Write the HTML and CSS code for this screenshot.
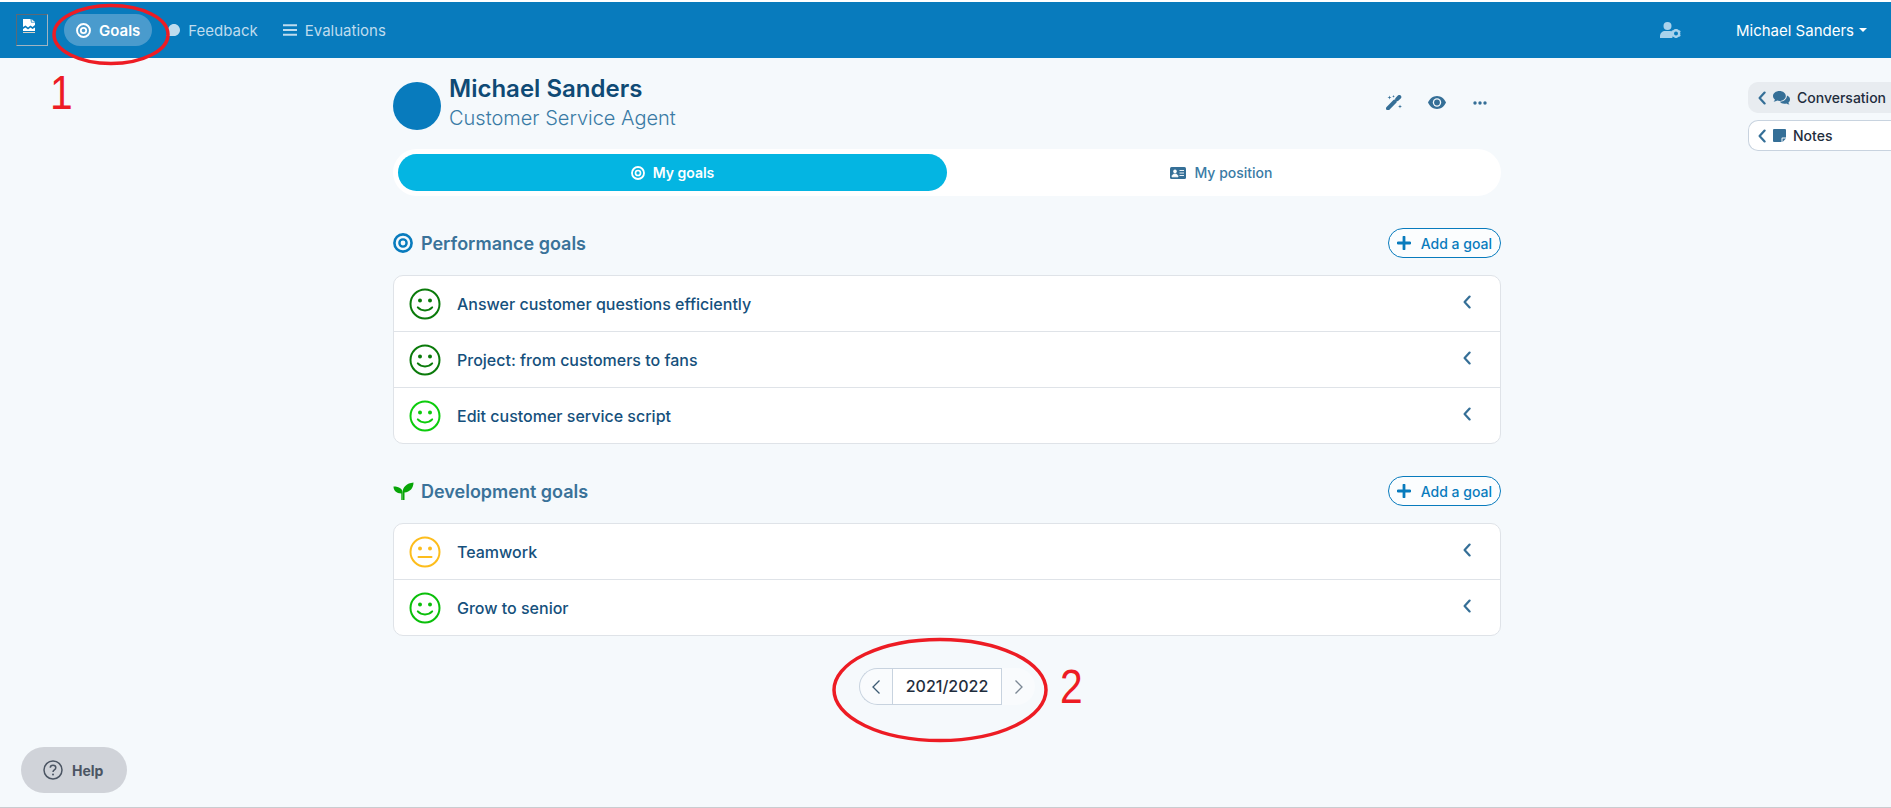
FILE: index.html
```html
<!DOCTYPE html>
<html lang="en">
<head>
    <meta charset="UTF-8">
    <title>Goals</title>
    <link rel="stylesheet" href="styles.css">
</head>
<body>
<svg width="0" height="0" class="defs">
    <symbol id="target" viewBox="0 0 20 20">
        <circle cx="10" cy="10" r="8.600" fill="none" stroke="currentColor" stroke-width="2.600"/>
        <circle cx="10" cy="10" r="3.600" fill="none" stroke="currentColor" stroke-width="2.400"/>
    </symbol>
    <symbol id="chev" viewBox="0 0 8 14">
        <path d="M6.600 1.600 1.600 7l5 5.400" fill="none" stroke="currentColor" stroke-width="2.200" stroke-linecap="round" stroke-linejoin="round"/>
    </symbol>
    <symbol id="plus" viewBox="0 0 14 14">
        <path d="M7 1v12M1 7h12" fill="none" stroke="currentColor" stroke-width="2.800" stroke-linecap="round"/>
    </symbol>
    <symbol id="happy" viewBox="0 0 32 32">
        <circle cx="16" cy="16" r="14.500" fill="none" stroke="currentColor" stroke-width="2"/>
        <circle cx="11" cy="12.600" r="2" fill="currentColor"/>
        <circle cx="21" cy="12.600" r="2" fill="currentColor"/>
        <path d="M8.800 19.400c3.600 4 10.800 4 14.400 0" fill="none" stroke="currentColor" stroke-width="2" stroke-linecap="round"/>
    </symbol>
    <symbol id="neutral" viewBox="0 0 32 32">
        <circle cx="16" cy="16" r="14.500" fill="none" stroke="currentColor" stroke-width="2"/>
        <circle cx="11" cy="12.600" r="2" fill="currentColor"/>
        <circle cx="21" cy="12.600" r="2" fill="currentColor"/>
        <path d="M9.500 21h13" fill="none" stroke="currentColor" stroke-width="2" stroke-linecap="round"/>
    </symbol>
</svg>

<header class="topbar">
    <div class="logo">
        <svg class="logo-img" viewBox="0 0 12 14">
            <path d="M0 0h7.500L8 3.500h4V6L9.500 8 7.500 6.500 5 8.500 2.500 6.500 0 8z" fill="#fff"/>
            <path d="M8.500 0 12 3H8.500z" fill="#dfe9f0"/>
            <path d="M0 10 2.500 8.500l2.500 2 2.500-2 2 1.500L12 8.500V12H0z" fill="#fff"/>
            <path d="M0 13h12v1H0z" fill="#dcd3c4"/>
        </svg>
    </div>
    <nav class="nav">
        <a class="nav-item active"><svg class="ic-15"><use href="#target"/></svg>Goals</a>
        <a class="nav-item">
            <svg class="ic-feedback" viewBox="0 0 14 12"><path d="M8 0c3.300 0 6 2.700 6 6s-2.700 6-6 6H0c1.200-.8 2-1.800 2-3V6c0-3.300 2.700-6 6-6z" fill="#bfdcee"/></svg>Feedback
        </a>
        <a class="nav-item">
            <svg class="ic-bars" viewBox="0 0 14 12"><path d="M0 1.200h14M0 6h14M0 10.800h14" stroke="#bfdcee" stroke-width="2"/></svg>Evaluations
        </a>
    </nav>
    <div class="top-right">
        <svg class="ic-usergear" viewBox="0 0 21 16">
            <circle cx="7.500" cy="4" r="4" fill="#a9d2ec"/>
            <path d="M0 16v-2c0-3 2.500-5 5-5h5c1 0 1.700.2 2.400.6V16z" fill="#a9d2ec"/>
            <circle cx="16" cy="11.500" r="3.200" fill="none" stroke="#a9d2ec" stroke-width="2.400"/>
            <path d="M16 7v1.500M16 14.500V16M11.700 9l1.300.8M19 13.200l1.300.8M11.700 14l1.300-.8M19 9.800l1.300-.8" stroke="#a9d2ec" stroke-width="1.600"/>
        </svg>
        <a class="user-menu">Michael Sanders<span class="caret"></span></a>
    </div>
</header>

<div class="page">
    <main class="content">
        <section class="profile">
            <div class="avatar"></div>
            <div class="who">
                <h1>Michael Sanders</h1>
                <p>Customer Service Agent</p>
            </div>
            <div class="tools">
                <svg class="tool-wand" viewBox="0 0 17 15">
                    <path d="M2 13.300 8.600 6.700M11.200 4.100 13.300 2" fill="none" stroke="#356f97" stroke-width="4" stroke-linecap="round"/>
                    <path d="M3.500.5l.5 1.500 1.500.5-1.500.5-.5 1.500L3 3l-1.500-.5L3 2zM7.500 0l.4 1 1 .4-1 .4-.4 1-.4-1-1-.4 1-.4zM14 9.500l.5 1.500 1.500.5-1.500.5-.5 1.500-.5-1.500-1.500-.5 1.500-.5z" fill="#356f97"/>
                </svg>
                <svg class="tool-eye" viewBox="0 0 18 13">
                    <path d="M9 0c4 0 7.400 2.800 9 6.500C16.400 10.200 13 13 9 13s-7.400-2.800-9-6.500C1.600 2.800 5 0 9 0z" fill="#356f97"/>
                    <circle cx="9" cy="6.500" r="4.200" fill="#f5f9fc"/>
                    <circle cx="9" cy="6.500" r="2.900" fill="#356f97"/>
                </svg>
                <svg class="tool-dots" viewBox="0 0 14 4">
                    <circle cx="2" cy="2" r="1.700" fill="#356f97"/>
                    <circle cx="7" cy="2" r="1.700" fill="#356f97"/>
                    <circle cx="12" cy="2" r="1.700" fill="#356f97"/>
                </svg>
            </div>
        </section>

        <div class="tabs">
            <a class="tab on"><svg class="ic-14"><use href="#target"/></svg>My goals</a>
            <a class="tab">
                <svg class="ic-card" viewBox="0 0 16 12">
                    <rect width="16" height="12" rx="1.500" fill="#356f97"/>
                    <circle cx="5" cy="4.400" r="1.800" fill="#fff"/>
                    <path d="M2 9.800c0-1.800 1.300-2.800 3-2.800s3 1 3 2.800zM9.500 3.500h4.500M9.500 6h4.500M9.500 8.500h4.500" fill="#fff" stroke="#fff" stroke-width=".9"/>
                </svg>My position
            </a>
        </div>

        <section class="goals">
            <div class="goals-head">
                <h2><svg class="ic-20 blue"><use href="#target"/></svg>Performance goals</h2>
                <a class="add-btn"><svg class="ic-plus"><use href="#plus"/></svg>Add a goal</a>
            </div>
            <ul class="goal-list">
                <li><svg class="smile dark"><use href="#happy"/></svg><span>Answer customer questions efficiently</span><svg class="row-chev"><use href="#chev"/></svg></li>
                <li><svg class="smile dark"><use href="#happy"/></svg><span>Project: from customers to fans</span><svg class="row-chev"><use href="#chev"/></svg></li>
                <li><svg class="smile green"><use href="#happy"/></svg><span>Edit customer service script</span><svg class="row-chev"><use href="#chev"/></svg></li>
            </ul>
        </section>

        <section class="goals">
            <div class="goals-head">
                <h2>
                    <svg class="ic-seed" viewBox="0 0 20 18">
                        <path d="M9 18V10.500C9 7 6 4.500 0 4.500c0 4 3 7 7.800 7v6.500z" fill="#07a507"/>
                        <path d="M9 18v-8C9.500 5 13 1.200 20 .5c0 5.500-3.500 9.500-9 10V18z" fill="#07a507"/>
                    </svg>Development goals
                </h2>
                <a class="add-btn"><svg class="ic-plus"><use href="#plus"/></svg>Add a goal</a>
            </div>
            <ul class="goal-list">
                <li><svg class="smile amber"><use href="#neutral"/></svg><span>Teamwork</span><svg class="row-chev"><use href="#chev"/></svg></li>
                <li><svg class="smile green2"><use href="#happy"/></svg><span>Grow to senior</span><svg class="row-chev"><use href="#chev"/></svg></li>
            </ul>
        </section>

        <div class="pager">
            <a class="pager-prev"><svg viewBox="0 0 10 16"><path d="M8.500 1.500 2 8l6.500 6.500" fill="none" stroke="#3d5a73" stroke-width="1.300"/></svg></a>
            <span class="pager-year">2021/2022</span>
            <a class="pager-next"><svg viewBox="0 0 10 16"><path d="M1.500 1.500 8 8l-6.500 6.500" fill="none" stroke="#7b8794" stroke-width="1.300"/></svg></a>
        </div>
    </main>

    <aside class="side">
        <a class="side-tab grey">
            <svg class="side-chev"><use href="#chev"/></svg>
            <svg class="ic-comments" viewBox="0 0 17 14">
                <path d="M6.500 0C10 0 12.800 2.200 12.800 5S10 10 6.500 10c-.9 0-1.700-.1-2.400-.4C3.200 10.300 2 10.800.6 10.800c.6-.6 1.100-1.400 1.300-2.300C.7 7.600 0 6.400 0 5 0 2.200 2.900 0 6.500 0z" fill="#356f97"/>
                <path d="M14 4.600c1.800.7 3 2.100 3 3.800 0 1.200-.6 2.300-1.600 3.100.1.800.6 1.600 1.100 2.100-1.200 0-2.300-.4-3.100-1.100-.6.200-1.300.3-2 .3-2 0-3.700-.8-4.600-2 3.800-.1 7.200-2.500 7.200-6.200z" fill="#356f97"/>
            </svg>
            Conversation
        </a>
        <a class="side-tab">
            <svg class="side-chev"><use href="#chev"/></svg>
            <svg class="ic-note" viewBox="0 0 13 13">
                <path d="M1 0h11a1 1 0 0 1 1 1v7.500H9.500a1 1 0 0 0-1 1V13H1a1 1 0 0 1-1-1V1a1 1 0 0 1 1-1z" fill="#356f97"/>
                <path d="M9.500 13V9.500H13z" fill="#356f97"/>
            </svg>
            Notes
        </a>
    </aside>
</div>

<a class="help"><svg class="ic-help" viewBox="0 0 20 20"><circle cx="10" cy="10" r="9" fill="none" stroke="#4b5563" stroke-width="1.500"/><path d="M7.300 7.800C7.300 6.200 8.500 5.300 10 5.300s2.800 1 2.800 2.400c0 2.300-2.800 2.100-2.800 4.300" fill="none" stroke="#4b5563" stroke-width="1.500"/><circle cx="10" cy="14.500" r="1" fill="#4b5563"/></svg>Help</a>

<!-- red marks drawn on top of the screenshot -->
<svg class="marks" viewBox="0 0 1891 808">
    <ellipse cx="111" cy="34.500" rx="57" ry="29" fill="none" stroke="#ed1c24" stroke-width="3.500"/>
    <ellipse cx="940" cy="690" rx="106" ry="50.500" fill="none" stroke="#ed1c24" stroke-width="3.500"/>
</svg>
<span class="mark-num one">1</span>
<span class="mark-num two">2</span>
</body>
</html>
```

FILE: styles.css
```css
*{
    margin:0;
    padding:0;
    box-sizing:border-box;
}
html,body{
    height:100%;
}
body{
    position:relative;
    height:808px;
    overflow:hidden;
    padding-top:2px;
    font-family:Inter,"Noto Sans",sans-serif;
    font-size:15px;
    color:#15507c;
    background:#f5f9fc;
    border-bottom:1px solid #c9ccd0;
}
body:before{
    content:'';
    position:absolute;
    top:0;
    left:0;
    right:0;
    height:2px;
    background:#fff;
}
a{
    display:flex;
    align-items:center;
}
ul{
    list-style-type:none;
}
.defs{
    position:absolute;
}

/* top bar */
.topbar{
    display:flex;
    align-items:center;
    height:56px;
    padding:0 24px 0 16px;
    background:#087bbd;
}
.logo{
    display:flex;
    justify-content:center;
    width:32px;
    height:32px;
    padding-top:4px;
    padding-right:7px;
    border:1px solid #5a6a78;
    border-right-color:#9fb4c2;
    border-bottom-color:#9fb4c2;
}
.logo-img{
    width:12px;
    height:14px;
}
.nav{
    display:flex;
    align-items:center;
    margin-left:16px;
}
.nav-item{
    height:32px;
    margin-right:25px;
    gap:8px;
    color:#bfdcee;
}
.nav-item.active{
    margin-right:14px;
    padding:0 12px;
    gap:8px;
    font-weight:600;
    color:#fff;
    border-radius:16px;
    background:#4a9bcd;
}
.ic-15{
    width:15px;
    height:15px;
}
.ic-feedback{
    width:14px;
    height:12px;
}
.ic-bars{
    width:14px;
    height:12px;
}
.top-right{
    display:flex;
    align-items:center;
    margin-left:auto;
}
.ic-usergear{
    width:21px;
    height:16px;
}
.user-menu{
    margin-left:55px;
    color:#fff;
}
.caret{
    width:0;
    height:0;
    margin-left:5px;
    border:4.500px solid transparent;
    border-top-color:#fff;
    border-bottom-width:0;
}

/* page grid */
.page{
    display:grid;
    grid-template-columns:393px 1108px 1fr;
}
.content{
    grid-column:2;
}
.side{
    grid-column:3;
    justify-self:end;
    width:143px;
    padding-top:24px;
}

/* profile head */
.profile{
    display:flex;
    align-items:center;
    height:91px;
    padding-top:5px;
}
.avatar{
    width:48px;
    height:48px;
    margin-right:8px;
    border-radius:50%;
    background:#087bbd;
}
.who{
    margin-top:-7px;
}
.who h1{
    font-size:24px;
    font-weight:600;
    line-height:30px;
    color:#0f4a75;
}
.who p{
    margin-top:1px;
    font-size:20px;
    font-weight:300;
    line-height:26px;
    color:#3a7ba5;
}
.tools{
    display:flex;
    align-items:center;
    margin-left:auto;
    margin-right:14px;
    margin-top:-7px;
}
.tool-wand{
    width:17px;
    height:15px;
    margin-right:25px;
}
.tool-eye{
    width:18px;
    height:13px;
    margin-right:27px;
}
.tool-dots{
    width:14px;
    height:4px;
}

/* tabs */
.tabs{
    display:flex;
    height:47px;
    padding:5px;
    border-radius:24px;
    background:#fff;
}
.tab{
    flex:1;
    justify-content:center;
    gap:8px;
    height:37px;
    font-size:14px;
    font-weight:500;
    color:#3a7ba5;
    border-radius:19px;
}
.tab.on{
    font-weight:600;
    flex:0 0 549px;
    color:#fff;
    background:#04b5e2;
}
.ic-14{
    width:14px;
    height:14px;
}
.ic-card{
    width:16px;
    height:12px;
}

/* goal sections */
.goals{
    margin-top:32px;
}
.goals-head{
    display:flex;
    align-items:center;
    justify-content:space-between;
    height:30px;
    margin-bottom:17px;
}
.goals-head h2{
    display:flex;
    align-items:center;
    gap:8px;
    font-size:18px;
    font-weight:600;
    color:#3a7299;
}
.ic-20{
    width:20px;
    height:20px;
}
.ic-seed{
    width:21px;
    height:18px;
    margin-right:-1px;
}
.blue{
    color:#087bbd;
}
.add-btn{
    gap:10px;
    height:30px;
    padding:0 8px;
    font-size:14px;
    font-weight:500;
    color:#087bbd;
    border:1px solid #087bbd;
    border-radius:15px;
    background:#fbfdfe;
}
.ic-plus{
    width:14px;
    height:14px;
}
.goal-list{
    border:1px solid #dfe3e8;
    border-radius:10px;
    background:#fff;
}
.goal-list li{
    display:flex;
    align-items:center;
    height:55px;
    padding:0 29px 0 15px;
    font-size:16px;
    font-weight:500;
    color:#15507c;
}
.goal-list li + li{
    height:56px;
    border-top:1px solid #dfe3e8;
}
.smile{
    flex:none;
    width:32px;
    height:32px;
    margin-right:16px;
}
.dark{
    color:#0a7a0a;
}
.green{
    color:#0ccc0c;
}
.green2{
    color:#0abf0a;
}
.amber{
    color:#fdbd1c;
}
.row-chev{
    width:8px;
    height:14px;
    margin-left:auto;
    margin-bottom:4px;
    color:#356f97;
}

/* year switcher */
.pager{
    display:flex;
    justify-content:center;
    height:37px;
    margin-top:32px;
}
.pager a{
    justify-content:center;
    width:33px;
}
.pager svg{
    width:10px;
    height:16px;
}
.pager-prev{
    border:1px solid #c8d3df;
    border-right:0;
    border-radius:19px 0 0 19px;
    background:#f9fbfd;
}
.pager-next{
    border-radius:0 19px 19px 0;
    background:#f9fbfd;
}
.pager-year{
    width:110px;
    font-size:16px;
    font-weight:500;
    line-height:35px;
    text-align:center;
    color:#1f2d3d;
    border:1px solid #c8d3df;
    background:#fff;
}

/* right tabs */
.side-tab{
    height:31px;
    margin-bottom:7px;
    padding-left:9px;
    font-size:14px;
    font-weight:500;
    color:#1f2d3d;
    border:1px solid #c8d3df;
    border-right:0;
    border-radius:10px 0 0 10px;
    background:#fff;
}
.side-tab.grey{
    border-color:#e8ecf0;
    background:#e8ecf0;
}
.side-chev{
    width:8px;
    height:14px;
    margin-right:7px;
    color:#356f97;
}
.ic-comments{
    width:17px;
    height:14px;
    margin-right:7px;
}
.ic-note{
    width:13px;
    height:13px;
    margin-right:7px;
}

/* floating help */
.help{
    position:absolute;
    left:21px;
    top:747px;
    gap:9px;
    width:106px;
    height:46px;
    padding-left:22px;
    font-size:14px;
    font-weight:700;
    color:#4b5563;
    border-radius:23px;
    background:#d0d3d9;
}
.ic-help{
    width:20px;
    height:20px;
}

/* annotations */
.marks{
    position:absolute;
    top:0;
    left:0;
    width:1891px;
    height:808px;
    pointer-events:none;
}
.mark-num{
    position:absolute;
    font-family:"Liberation Sans",sans-serif;
    font-size:48px;
    line-height:48px;
    color:#ed1c24;
    transform:scaleX(.85);
    transform-origin:left top;
}
.mark-num.one{
    left:50px;
    top:69px;
}
.mark-num.two{
    left:1060px;
    top:663px;
}
```
